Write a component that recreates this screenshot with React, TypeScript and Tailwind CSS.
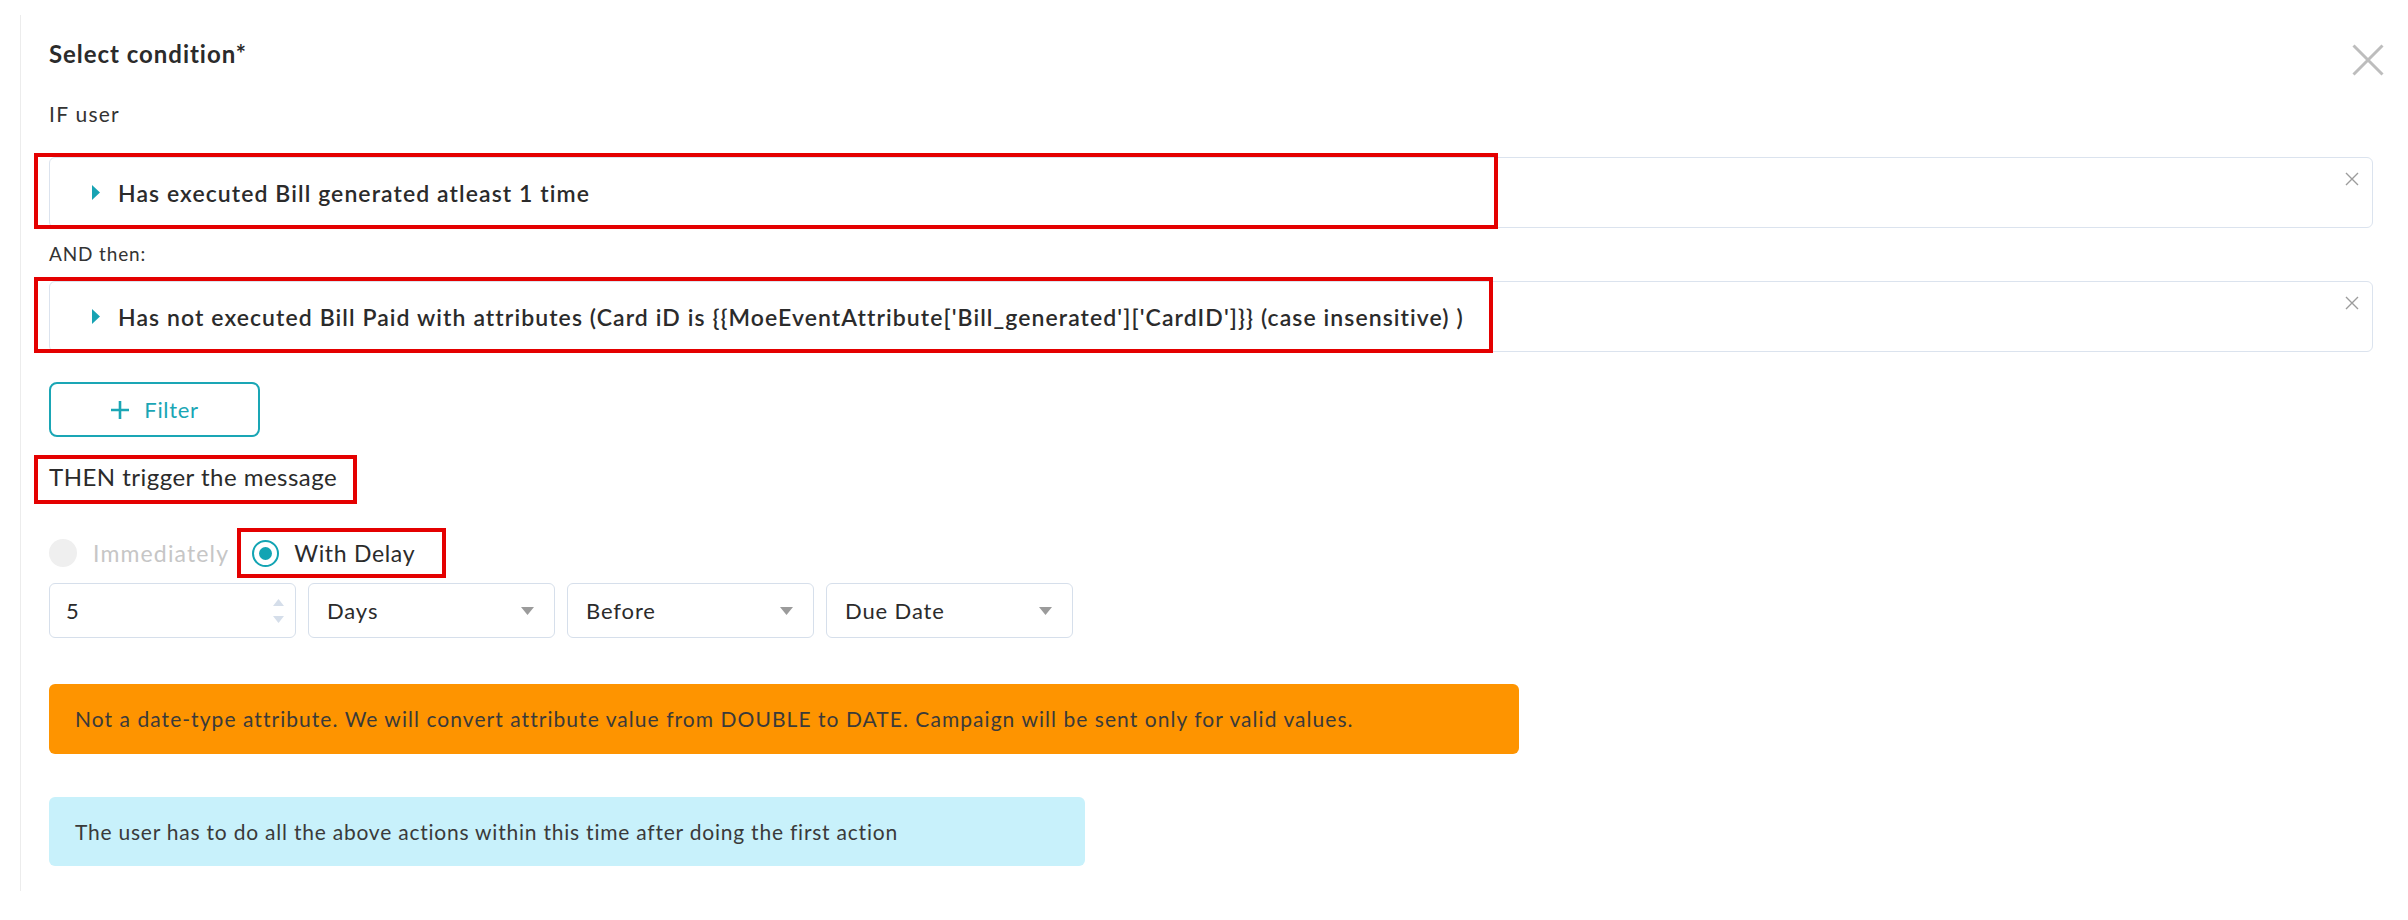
import React from "react";

const font = { fontFamily: "Lato, 'Open Sans', Arial, sans-serif" };

function Caret() {
  return (
    <svg width="8" height="15" viewBox="0 0 8 15" className="shrink-0">
      <path d="M0 0 L8 7.5 L0 15 Z" fill="#17a3b3" />
    </svg>
  );
}

function SmallX() {
  return (
    <svg width="14" height="14" viewBox="0 0 14 14" className="absolute right-[13px] top-[14px]">
      <path d="M1 1 L13 13 M13 1 L1 13" stroke="#9c9c9c" strokeWidth="1.4" />
    </svg>
  );
}

function SelectArrow() {
  return (
    <svg width="13" height="8" viewBox="0 0 13 8">
      <path d="M0 0 L13 0 L6.5 8 Z" fill="#9b9b9b" />
    </svg>
  );
}

interface ConditionProps {
  text: string;
  markWidth: string;
}

function Condition({ text, markWidth }: ConditionProps) {
  return (
    <div className="relative">
      <div className="relative flex h-[71px] items-center gap-[18px] rounded-[6px] border border-[#dbe3ee] bg-white pl-[42px]">
        <Caret />
        <span className="text-[23px] font-semibold leading-[28px] tracking-[0.047em] text-[#2b2b2b]">{text}</span>
        <SmallX />
      </div>
      <div
        className={`pointer-events-none absolute -left-[15px] -top-[4px] h-[76px] border-[4px] border-[#e40000] ${markWidth}`}
      />
    </div>
  );
}

function Select({ label }: { label: string }) {
  return (
    <div className="flex h-[55px] w-[247px] items-center justify-between rounded-[6px] border border-[#d6dfeb] bg-white pl-[18px] pr-[20px]">
      <span className="text-[22px] leading-[28px] tracking-[0.04em] text-[#2b2b2b]">{label}</span>
      <SelectArrow />
    </div>
  );
}

export default function App() {
  return (
    <div className="relative h-[920px] w-[2408px] bg-white" style={font}>
      <svg width="32" height="32" viewBox="0 0 32 32" className="absolute left-[2352px] top-[29px]">
        <path d="M1.5 1.5 L30.5 30.5 M30.5 1.5 L1.5 30.5" stroke="#bdbdbd" strokeWidth="3" />
      </svg>

      <div className="ml-[20px] mt-[15px] h-[876px] border-l border-[#ececec] pl-[28px] pr-[35px] pt-[25px]">
        <div className="text-[24px] font-bold leading-[28px] tracking-[0.04em] text-[#2b2b2b]">Select condition*</div>
        <div className="mt-[33px] text-[21px] leading-[26px] tracking-[0.06em] text-[#333]">IF user</div>

        <div className="mt-[30px]">
          <Condition text="Has executed Bill generated atleast 1 time" markWidth="w-[1464px]" />
        </div>

        <div className="mt-[14px] text-[19px] leading-[24px] tracking-[0.045em] text-[#333]">AND then:</div>

        <div className="mt-[15px]">
          <Condition
            text="Has not executed Bill Paid with attributes (Card iD is {{MoeEventAttribute['Bill_generated']['CardID']}} (case insensitive) )"
            markWidth="w-[1459px]"
          />
        </div>

        <button className="mt-[30px] flex h-[55px] w-[211px] items-center justify-center gap-[14px] rounded-[8px] border-2 border-[#1aa6b5] bg-white text-[#1aa6b5]">
          <svg width="20" height="20" viewBox="0 0 20 20">
            <path d="M10 1 V19 M1 10 H19" stroke="#1aa6b5" strokeWidth="2.6" />
          </svg>
          <span className="text-[22px] leading-[28px] tracking-[0.03em]">Filter</span>
        </button>

        <div className="mt-[26px] flex">
          <div className="relative text-[24px] leading-[28px] tracking-[0.02em] text-[#2b2b2b]">
            THEN trigger the message
            <div className="pointer-events-none absolute -bottom-[13px] -left-[15px] -right-[20px] -top-[8px] border-[4px] border-[#e40000]" />
          </div>
        </div>

        <div className="mt-[48px] flex h-[28px] items-center">
          <div className="flex items-center gap-[16px]">
            <div className="h-[28px] w-[28px] rounded-full bg-[#efefef]" />
            <span className="text-[23px] leading-[28px] tracking-[0.05em] text-[#c6c6c6]">Immediately</span>
          </div>
          <div className="relative ml-[23px] flex items-center gap-[15px]">
            <div className="flex h-[27px] w-[27px] items-center justify-center rounded-full border-2 border-[#12a4b3]">
              <div className="h-[13px] w-[13px] rounded-full bg-[#12a4b3]" />
            </div>
            <span className="text-[23px] leading-[28px] tracking-[0.03em] text-[#2b2b2b]">With Delay</span>
            <div className="pointer-events-none absolute -bottom-[11px] -left-[15px] -right-[31px] -top-[11px] border-[4px] border-[#e40000]" />
          </div>
        </div>

        <div className="mt-[16px] flex gap-[12px]">
          <div className="flex h-[55px] w-[247px] items-center justify-between rounded-[6px] border border-[#d6dfeb] bg-white pl-[16px] pr-[11px]">
            <span className="text-[22px] leading-[28px] text-[#2b2b2b]">5</span>
            <div className="flex flex-col gap-[10px]">
              <svg width="11" height="7" viewBox="0 0 11 7">
                <path d="M0 7 L5.5 0 L11 7 Z" fill="#d5deea" />
              </svg>
              <svg width="11" height="7" viewBox="0 0 11 7">
                <path d="M0 0 L11 0 L5.5 7 Z" fill="#d5deea" />
              </svg>
            </div>
          </div>
          <Select label="Days" />
          <Select label="Before" />
          <Select label="Due Date" />
        </div>

        <div className="mt-[46px] flex h-[70px] w-[1470px] items-center rounded-[6px] bg-[#fe9400] pl-[26px]">
          <span className="text-[21px] leading-[26px] tracking-[0.05em] text-[#3a3a3a]">
            Not a date-type attribute. We will convert attribute value from DOUBLE to DATE. Campaign will be sent only for valid values.
          </span>
        </div>

        <div className="mt-[43px] flex h-[69px] w-[1036px] items-center rounded-[6px] bg-[#c8f1fb] pl-[26px]">
          <span className="text-[21px] leading-[26px] tracking-[0.037em] text-[#3a3a3a]">
            The user has to do all the above actions within this time after doing the first action
          </span>
        </div>
      </div>
    </div>
  );
}
